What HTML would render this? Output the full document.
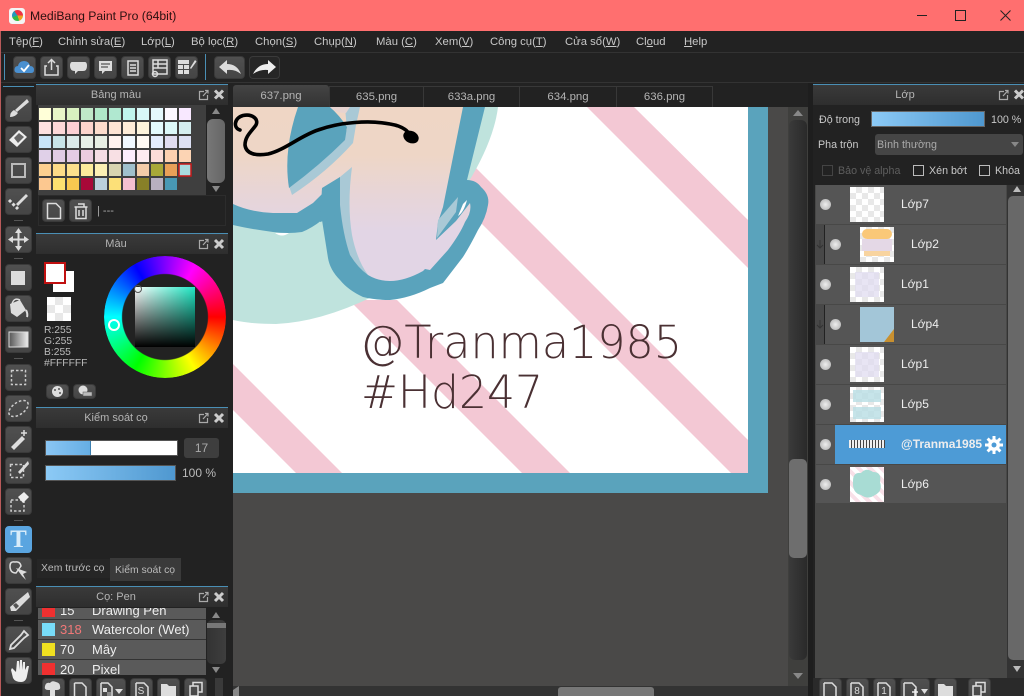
<!DOCTYPE html>
<html><head><meta charset="utf-8"><style>
html,body{margin:0;padding:0;width:1024px;height:696px;overflow:hidden;background:#222}
body{position:relative;font-family:"Liberation Sans","Noto Sans CJK SC",sans-serif;font-size:11.3px;color:#c8c8c8}
.a{position:absolute;box-sizing:border-box}
.t{position:absolute;white-space:nowrap;line-height:14px}
.c{text-align:center}
.hd{position:absolute;background:linear-gradient(#3a3a3a,#2e2e2e);height:20px;text-align:center;line-height:21px;color:#b4b4b4;font-size:11px}
.bl{position:absolute;height:1px;background:#4a8fb5}
.b{position:absolute;box-sizing:border-box;background:linear-gradient(#505050,#454545);border:1px solid #3a3a3a;border-radius:4px}
.row{position:absolute;left:816px;width:190px;height:39px;background:#555}
.ck{background-color:#fff;background-image:conic-gradient(#e8e8e8 25%,#fff 0 50%,#e8e8e8 0 75%,#fff 0);background-size:12px 12px}
.th{position:absolute;width:34px;height:35px;overflow:hidden}
.eye{position:absolute;width:11px;height:11px;border-radius:50%;background:radial-gradient(#eee,#aaa)}
.ln{position:absolute;color:#eee;font-size:12px;line-height:14px}
.tb{font-size:11.4px}
.ly{font-size:10.7px}
.br{font-size:13px}
u{text-decoration:underline}
</style></head><body>

<!-- title bar -->
<div class="a" style="left:0;top:0;width:1024px;height:31px;background:#ff6f6f"></div>
<div class="a" style="left:9px;top:8px;width:16px;height:16px;background:#f4f4f4;border-radius:3px"></div>
<div class="a" style="left:12px;top:10px;width:11px;height:11px;border-radius:50%;background:conic-gradient(#e34 0 25%,#f0a020 0 45%,#3b4 0 70%,#29b 0 90%,#e34 0)"></div>
<div class="t" style="left:30px;top:9px;font-size:12.2px;color:#2a1010">MediBang Paint Pro (64bit)</div>
<svg class="a" style="left:900px;top:0" width="124" height="31"><path d="M17 15.5H27" stroke="#222" fill="none"/><rect x="55.5" y="10.5" width="10" height="10" stroke="#222" fill="none"/><path d="M100.5 10.5l10 10M110.5 10.5l-10 10" stroke="#222" fill="none"/></svg>

<!-- left window border -->
<div class="a" style="left:0;top:31px;width:1px;height:665px;background:#b85a5a"></div>

<!-- menu -->
<div class="t" style="left:9px;top:35px">Tệp(<u>F</u>)</div>
<div class="t" style="left:58px;top:35px">Chỉnh sửa(<u>E</u>)</div>
<div class="t" style="left:141px;top:35px">Lớp(<u>L</u>)</div>
<div class="t" style="left:191px;top:35px">Bộ lọc(<u>R</u>)</div>
<div class="t" style="left:255px;top:35px">Chọn(<u>S</u>)</div>
<div class="t" style="left:314px;top:35px">Chụp(<u>N</u>)</div>
<div class="t" style="left:376px;top:35px">Màu (<u>C</u>)</div>
<div class="t" style="left:435px;top:35px">Xem(<u>V</u>)</div>
<div class="t" style="left:490px;top:35px">Công cụ(<u>T</u>)</div>
<div class="t" style="left:565px;top:35px">Cửa sổ(<u>W</u>)</div>
<div class="t" style="left:636px;top:35px">Cl<u>o</u>ud</div>
<div class="t" style="left:684px;top:35px"><u>H</u>elp</div>
<div class="a" style="left:1px;top:52px;width:1023px;height:1px;background:#333"></div>
<div class="a" style="left:1px;top:82px;width:1023px;height:1px;background:#333"></div>

<!-- toolbar -->
<div class="a" style="left:4px;top:54px;width:1px;height:26px;background:#4a8fb5"></div>
<div class="a" style="left:205px;top:54px;width:1px;height:26px;background:#4a8fb5"></div>
<div class="b" style="left:13px;top:56px;width:23px;height:23px"></div>
<div class="b" style="left:40px;top:56px;width:23px;height:23px"></div>
<div class="b" style="left:67px;top:56px;width:23px;height:23px"></div>
<div class="b" style="left:94px;top:56px;width:23px;height:23px"></div>
<div class="b" style="left:121px;top:56px;width:23px;height:23px"></div>
<div class="b" style="left:148px;top:56px;width:23px;height:23px"></div>
<div class="b" style="left:175px;top:56px;width:23px;height:23px"></div>
<div class="b" style="left:214px;top:56px;width:31px;height:23px"></div>
<div class="b" style="left:249px;top:56px;width:31px;height:23px;background:#262626"></div>

<!-- tool strip buttons -->
<div class="a" style="left:3px;top:86px;width:31px;height:1px;background:#4a8fb5"></div>
<div class="b" style="left:5px;top:95px;width:27px;height:27px"></div>
<div class="b" style="left:5px;top:126px;width:27px;height:27px"></div>
<div class="b" style="left:5px;top:157px;width:27px;height:27px"></div>
<div class="b" style="left:5px;top:188px;width:27px;height:27px"></div>
<div class="a" style="left:14px;top:220px;width:9px;height:1px;background:#555"></div>
<div class="b" style="left:5px;top:226px;width:27px;height:27px"></div>
<div class="a" style="left:14px;top:258px;width:9px;height:1px;background:#555"></div>
<div class="b" style="left:5px;top:264px;width:27px;height:27px"></div>
<div class="b" style="left:5px;top:295px;width:27px;height:27px"></div>
<div class="b" style="left:5px;top:326px;width:27px;height:27px"></div>
<div class="a" style="left:14px;top:358px;width:9px;height:1px;background:#555"></div>
<div class="b" style="left:5px;top:364px;width:27px;height:27px"></div>
<div class="b" style="left:5px;top:395px;width:27px;height:27px"></div>
<div class="b" style="left:5px;top:426px;width:27px;height:27px"></div>
<div class="b" style="left:5px;top:457px;width:27px;height:27px"></div>
<div class="b" style="left:5px;top:488px;width:27px;height:27px"></div>
<div class="a" style="left:14px;top:520px;width:9px;height:1px;background:#555"></div>
<div class="b" style="left:5px;top:526px;width:27px;height:27px;background:#5aa5e0;border-color:#5aa5e0"></div>
<div class="b" style="left:5px;top:557px;width:27px;height:27px"></div>
<div class="b" style="left:5px;top:588px;width:27px;height:27px"></div>
<div class="a" style="left:14px;top:620px;width:9px;height:1px;background:#555"></div>
<div class="b" style="left:5px;top:626px;width:27px;height:27px"></div>
<div class="b" style="left:5px;top:657px;width:27px;height:27px"></div>
<div class="t" style="left:5px;top:528px;width:27px;text-align:center;font:bold 25px/24px 'Liberation Serif',serif;color:#d8ecfa">T</div>

<!-- palette panel -->
<div class="bl" style="left:36px;top:84px;width:192px"></div>
<div class="hd" style="left:36px;top:85px;width:192px;padding-right:32px;box-sizing:border-box;text-align:center">Bảng màu</div>
<div class="a" style="left:38px;top:105px;width:168px;height:90px;background:#3f3f3f"></div>
<svg class="a" style="left:39px;top:108px" width="156" height="86">
<g id="p">
<rect x="0" y="0" width="12" height="12" fill="#ffffd8"/><rect x="14" y="0" width="12" height="12" fill="#e8f5c8"/><rect x="28" y="0" width="12" height="12" fill="#d8f0c0"/><rect x="42" y="0" width="12" height="12" fill="#c0e8c8"/><rect x="56" y="0" width="12" height="12" fill="#b0e8c8"/><rect x="70" y="0" width="12" height="12" fill="#b0e8d0"/><rect x="84" y="0" width="12" height="12" fill="#c0f4ec"/><rect x="98" y="0" width="12" height="12" fill="#d8f8f8"/><rect x="112" y="0" width="12" height="12" fill="#e4f8fc"/><rect x="126" y="0" width="12" height="12" fill="#fcf8ff"/><rect x="140" y="0" width="12" height="12" fill="#f8e8ff"/>
<rect x="0" y="14" width="12" height="12" fill="#fde0e0"/><rect x="14" y="14" width="12" height="12" fill="#fcd8d8"/><rect x="28" y="14" width="12" height="12" fill="#fcd0d4"/><rect x="42" y="14" width="12" height="12" fill="#fcd4cc"/><rect x="56" y="14" width="12" height="12" fill="#fcdccc"/><rect x="70" y="14" width="12" height="12" fill="#fde4d4"/><rect x="84" y="14" width="12" height="12" fill="#fdecd8"/><rect x="98" y="14" width="12" height="12" fill="#fdf4dc"/><rect x="112" y="14" width="12" height="12" fill="#e4fafc"/><rect x="126" y="14" width="12" height="12" fill="#dcf8f8"/><rect x="140" y="14" width="12" height="12" fill="#d4eef0"/>
<rect x="0" y="28" width="12" height="12" fill="#c8e4f8"/><rect x="14" y="28" width="12" height="12" fill="#c8e4e8"/><rect x="28" y="28" width="12" height="12" fill="#dceaea"/><rect x="42" y="28" width="12" height="12" fill="#e8f0e8"/><rect x="56" y="28" width="12" height="12" fill="#e8efe4"/><rect x="70" y="28" width="12" height="12" fill="#fff4f0"/><rect x="84" y="28" width="12" height="12" fill="#f0f8ff"/><rect x="98" y="28" width="12" height="12" fill="#fffaf4"/><rect x="112" y="28" width="12" height="12" fill="#e4ecfc"/><rect x="126" y="28" width="12" height="12" fill="#e0dcf0"/><rect x="140" y="28" width="12" height="12" fill="#dce0f4"/>
<rect x="0" y="42" width="12" height="12" fill="#e0d0e8"/><rect x="14" y="42" width="12" height="12" fill="#e0cce4"/><rect x="28" y="42" width="12" height="12" fill="#e4cce4"/><rect x="42" y="42" width="12" height="12" fill="#eccce0"/><rect x="56" y="42" width="12" height="12" fill="#f4dce4"/><rect x="70" y="42" width="12" height="12" fill="#f8e0e4"/><rect x="84" y="42" width="12" height="12" fill="#fceefc"/><rect x="98" y="42" width="12" height="12" fill="#fdecf0"/><rect x="112" y="42" width="12" height="12" fill="#fcdcd8"/><rect x="126" y="42" width="12" height="12" fill="#fcd0b0"/><rect x="140" y="42" width="12" height="12" fill="#fcd4b4"/>
<rect x="0" y="56" width="12" height="12" fill="#fcd090"/><rect x="14" y="56" width="12" height="12" fill="#fcdc88"/><rect x="28" y="56" width="12" height="12" fill="#fce08c"/><rect x="42" y="56" width="12" height="12" fill="#fcec9c"/><rect x="56" y="56" width="12" height="12" fill="#fcf0b4"/><rect x="70" y="56" width="12" height="12" fill="#d8d4b0"/><rect x="84" y="56" width="12" height="12" fill="#a0c0cc"/><rect x="98" y="56" width="12" height="12" fill="#f4cca8"/><rect x="112" y="56" width="12" height="12" fill="#a8a838"/><rect x="126" y="56" width="12" height="12" fill="#e8a058"/><rect x="140" y="56" width="12" height="12" fill="#a8dce0" stroke="#c81818" stroke-width="1.5"/>
<rect x="0" y="70" width="12" height="12" fill="#fcc890"/><rect x="14" y="70" width="12" height="12" fill="#fce070"/><rect x="28" y="70" width="12" height="12" fill="#f8c850"/><rect x="42" y="70" width="12" height="12" fill="#a80838"/><rect x="56" y="70" width="12" height="12" fill="#bcd0dc"/><rect x="70" y="70" width="12" height="12" fill="#fce078"/><rect x="84" y="70" width="12" height="12" fill="#f4c0d0"/><rect x="98" y="70" width="12" height="12" fill="#888028"/><rect x="112" y="70" width="12" height="12" fill="#b8b0c0"/><rect x="126" y="70" width="12" height="12" fill="#4898b4"/>
</g></svg>
<div class="a" style="left:207px;top:119px;width:18px;height:64px;background:linear-gradient(90deg,#777,#666);border-radius:6px"></div>
<div class="a" style="left:38px;top:195px;width:188px;height:31px;border:1px solid #2c2c2c"></div>
<div class="b" style="left:42px;top:199px;width:23px;height:23px"></div>
<div class="b" style="left:69px;top:199px;width:23px;height:23px"></div>
<div class="t" style="left:97px;top:204px;color:#aaa;font-size:11px">| ---</div>

<!-- colour panel -->
<div class="bl" style="left:36px;top:233px;width:192px"></div>
<div class="hd" style="left:36px;top:234px;width:192px;padding-right:32px;box-sizing:border-box">Màu</div>
<div class="a" style="left:53px;top:271px;width:21px;height:21px;background:#fff"></div>
<div class="a" style="left:44px;top:262px;width:22px;height:22px;background:#fff;border:2px solid #c01010"></div>
<div class="a ck" style="left:47px;top:297px;width:24px;height:24px;background-size:16px 16px"></div>
<div class="t" style="left:44px;top:325px;font-size:10.3px;line-height:11px;color:#bbb">R:255<br>G:255<br>B:255<br>#FFFFFF</div>
<div class="a" style="left:104px;top:256px;width:122px;height:122px;border-radius:50%;background:conic-gradient(from 90deg,#f00,#ff0,#0f0,#0ff,#00f,#f0f,#f00);-webkit-mask:radial-gradient(circle,transparent 42.5px,#000 43.5px)"></div>
<div class="a" style="left:135px;top:287px;width:60px;height:60px;background:linear-gradient(transparent,#000),linear-gradient(90deg,#fff,#1fe8c4)"></div>
<div class="a" style="left:134px;top:285px;width:8px;height:8px;border:1px solid #555;border-radius:50%"></div>
<div class="a" style="left:108px;top:319px;width:12px;height:12px;border:2px solid #fff;border-radius:50%"></div>
<div class="b" style="left:46px;top:384px;width:23px;height:15px"></div>
<div class="b" style="left:73px;top:384px;width:23px;height:15px"></div>

<!-- brush control -->
<div class="bl" style="left:36px;top:407px;width:192px"></div>
<div class="hd" style="left:36px;top:408px;width:192px;padding-right:32px;box-sizing:border-box">Kiểm soát cọ</div>
<div class="a" style="left:45px;top:440px;width:133px;height:16px;background:#fff;border:1px solid #555"></div>
<div class="a" style="left:46px;top:441px;width:45px;height:14px;background:linear-gradient(90deg,#8ac6f4,#66aee4);border-right:1px solid #3b7fb0"></div>
<div class="a" style="left:184px;top:438px;width:35px;height:20px;background:#3e3e3e;border-radius:3px;text-align:center;line-height:20px;color:#aaa;font-size:12px">17</div>
<div class="a" style="left:45px;top:465px;width:131px;height:16px;background:linear-gradient(90deg,#8ccaf6,#4f98d0);border:1px solid #555"></div>
<div class="t" style="left:182px;top:466px;color:#bbb;font-size:12px">100 %</div>
<div class="a" style="left:37px;top:559px;width:73px;height:19px;background:#262626"></div>
<div class="t" style="left:41px;top:562px;font-size:10.4px;color:#bbb">Xem trước cọ</div>
<div class="a" style="left:110px;top:558px;width:71px;height:23px;background:#3a3a3a"></div>
<div class="t" style="left:115px;top:564px;font-size:10.4px;color:#bbb">Kiểm soát cọ</div>

<!-- brush panel -->
<div class="bl" style="left:36px;top:586px;width:192px"></div>
<div class="hd" style="left:36px;top:587px;width:192px;padding-right:32px;box-sizing:border-box">Cọ: Pen</div>
<div class="a" style="left:38px;top:608px;width:168px;height:67px;background:#5a5a5a;overflow:hidden">
 <div class="a" style="left:0;top:11px;width:168px;height:1px;background:#333"></div>
 <div class="a" style="left:0;top:31px;width:168px;height:1px;background:#333"></div>
 <div class="a" style="left:0;top:51px;width:168px;height:1px;background:#333"></div>
 <div class="a" style="left:4px;top:-3px;width:13px;height:12px;background:#f03030"></div>
 <div class="a" style="left:4px;top:15px;width:13px;height:13px;background:#78dcf8"></div>
 <div class="a" style="left:4px;top:35px;width:13px;height:13px;background:#f0e020"></div>
 <div class="a" style="left:4px;top:55px;width:13px;height:13px;background:#f03030"></div>
 <div class="t br" style="left:22px;top:-4px;color:#eee">15</div><div class="t br" style="left:54px;top:-4px;color:#eee">Drawing Pen</div>
 <div class="t br" style="left:22px;top:15px;color:#f07878">318</div><div class="t br" style="left:54px;top:15px;color:#eee">Watercolor (Wet)</div>
 <div class="t br" style="left:22px;top:35px;color:#eee">70</div><div class="t br" style="left:54px;top:35px;color:#eee">Mây</div>
 <div class="t br" style="left:22px;top:55px;color:#eee">20</div><div class="t br" style="left:54px;top:55px;color:#eee">Pixel</div>
</div>
<div class="a" style="left:207px;top:620px;width:19px;height:44px;background:linear-gradient(90deg,#333,#3e3e3e);border-radius:5px"></div>
<div class="a" style="left:207px;top:623px;width:19px;height:5px;background:#777"></div>
<div class="b" style="left:42px;top:678px;width:23px;height:22px"></div>
<div class="b" style="left:69px;top:678px;width:23px;height:22px"></div>
<div class="b" style="left:96px;top:678px;width:30px;height:22px"></div>
<div class="b" style="left:130px;top:678px;width:23px;height:22px"></div>
<div class="b" style="left:157px;top:678px;width:23px;height:22px"></div>
<div class="b" style="left:184px;top:678px;width:23px;height:22px"></div>
<div class="a" style="left:215px;top:678px;width:8px;height:18px;background:#3a3a3a"></div>

<!-- tabs -->
<div class="a tb" style="left:233px;top:85px;width:96px;height:22px;background:linear-gradient(#444,#333);border-radius:3px 3px 0 0;text-align:center;line-height:23px;color:#b4b4b4">637.png</div>
<div class="a tb" style="left:329px;top:86px;width:95px;height:21px;border:1px solid #383838;border-bottom:0;text-align:center;line-height:21px;color:#b4b4b4">635.png</div>
<div class="a tb" style="left:424px;top:86px;width:96px;height:21px;border:1px solid #383838;border-left:0;border-bottom:0;text-align:center;line-height:21px;color:#b4b4b4">633a.png</div>
<div class="a tb" style="left:520px;top:86px;width:97px;height:21px;border:1px solid #383838;border-left:0;border-bottom:0;text-align:center;line-height:21px;color:#b4b4b4">634.png</div>
<div class="a tb" style="left:617px;top:86px;width:96px;height:21px;border:1px solid #383838;border-left:0;border-bottom:0;text-align:center;line-height:21px;color:#b4b4b4">636.png</div>

<!-- canvas -->
<div class="a" style="left:233px;top:107px;width:555px;height:579px;background:#4a4948"></div>
<svg class="a" style="left:233px;top:107px" width="555" height="386" viewBox="233 107 555 386">
<defs><linearGradient id="sk" x1="0" y1="107" x2="0" y2="285" gradientUnits="userSpaceOnUse"><stop offset="0" stop-color="#efd6c5"/><stop offset=".27" stop-color="#eed6c6"/><stop offset=".5" stop-color="#e7d5d8"/><stop offset=".7" stop-color="#e2d5e5"/><stop offset="1" stop-color="#e2d5e5"/></linearGradient></defs>
<rect x="233" y="107" width="535" height="386" fill="#5aa3bc"/>
<rect x="233" y="107" width="515" height="366" fill="#fff"/>
<g fill="#f3c8d4">
<path d="M587 107H634L748 220V268Z"/>
<path d="M460 152L748 440V473H731L400 142Z"/>
<path d="M349 300H397L570 473H522L300 251Z"/>
<path d="M233 364L342 473H296L233 410Z"/>
</g>
<path d="M233 220H330L372 297Q320 322 276 324Q250 324 233 320Z" fill="#bfe3dd"/>
<path d="M470 107H498Q494 140 468 183L450 150Z" fill="#bfe3dd"/>
<path d="M485 107L467 180Q476 180 481 187Q490 195 488 205Q486 218 478 230Q470 246 463 257L443 283L430 288Q410 298 390 300Q375 300 363 297Q348 290 340 280Q330 270 328 258L322 220Q312 228 302 232Q288 234 273 232Q250 229 233 225V107Z" fill="#5aa3bc"/>
<path d="M233 107H463L443 207L438 222L436 240L456 221L470 203Q472 212 465 222Q460 234 448 250L430 270L425 269L423 271Q405 281 390 281Q378 281 368 275Q355 262 350 240L347 200L340 177Q330 186 313 203L297 213L273 213Q250 212 233 204Z" fill="url(#sk)"/>
<path d="M322 188L340 177V213Q321 222 320 222Z" fill="#5aa3bc"/>
<path d="M352 167L340 177L340 205Q343 235 350 255Q358 268 368 275Q357 260 352 235Q347 205 352 167Z" fill="#a9c9d6"/>
<path d="M345 107H360L356 125L353 143Q327 172 292 195L289 186L347 130Z" fill="#a9c9d6"/>
<path d="M298 107H330Q340 116 347 127L345 140Q320 165 289 188Q283 150 298 107Z" fill="#5aa3bc"/>
<path d="M330 107H350L346 113Q335 113 330 107Z" fill="#e6d3d0"/>
<path d="M458 197L456 212L437 238L438 220Z" fill="#a9c9d6"/>
<path d="M463 204L467 200Q464 212 458 216Z" fill="#fff"/>
<path d="M275 233Q282 238 289 233Z" fill="#fff"/>
<path d="M240 130C233 128 234 118 243 115.5C252 113.5 259 119 256 125C252 131 245 136 245 145C246 154 256 156 268 154C285 150 300 136 318 130C340 122 370 120 390 124C402 126 408 130 410 136" fill="none" stroke="#000" stroke-width="3.6" stroke-linecap="round"/>
<ellipse cx="411" cy="137" rx="8" ry="6" fill="#000" transform="rotate(25 411 137)"/>
<g fill="#4a3033" font-family="'DejaVu Sans','Liberation Sans',sans-serif" font-weight="200" font-size="45">
<text x="360" y="358" textLength="322" lengthAdjust="spacingAndGlyphs">@Tranma1985</text>
<text x="361" y="408" textLength="182" lengthAdjust="spacingAndGlyphs">#Hd247</text>
</g>
</svg>

<!-- canvas scrollbars -->
<div class="a" style="left:788px;top:107px;width:20px;height:579px;background:#3f3f3d"></div>
<div class="a" style="left:789px;top:120px;width:18px;height:540px;background:linear-gradient(90deg,#3a3a3a,#2a2a2a);border-radius:6px"></div>
<div class="a" style="left:789px;top:459px;width:18px;height:99px;background:#6e6e6e;border-radius:5px"></div>
<div class="a" style="left:808px;top:83px;width:5px;height:613px;background:#1e1e1e"></div>
<div class="a" style="left:233px;top:686px;width:575px;height:10px;background:#333"></div>
<div class="a" style="left:558px;top:687px;width:96px;height:9px;background:#777;border-radius:3px 3px 0 0"></div>

<!-- layer panel -->
<div class="bl" style="left:813px;top:84px;width:211px"></div>
<div class="hd" style="left:813px;top:85px;width:211px;padding-right:27px;box-sizing:border-box">Lớp</div>
<div class="t ly" style="left:819px;top:113px">Độ trong</div>
<div class="a" style="left:871px;top:111px;width:114px;height:16px;background:linear-gradient(90deg,#8ccaf6,#4f98d0);border:1px solid #666"></div>
<div class="t ly" style="left:991px;top:113px">100 %</div>
<div class="t ly" style="left:818px;top:138px">Pha trộn</div>
<div class="a" style="left:875px;top:134px;width:148px;height:21px;background:#454545;border-radius:3px"></div>
<div class="t ly" style="left:877px;top:138px;color:#aaa">Bình thường</div>
<svg class="a" style="left:1010px;top:142px" width="10" height="6"><path d="M1 0H9L5 5Z" fill="#888"/></svg>
<div class="a" style="left:822px;top:165px;width:11px;height:11px;border:1px solid #444"></div>
<div class="t ly" style="left:838px;top:164px;color:#5e5e5e">Bảo vệ alpha</div>
<div class="a" style="left:913px;top:165px;width:11px;height:11px;border:1px solid #bbb"></div>
<div class="t ly" style="left:929px;top:164px">Xén bớt</div>
<div class="a" style="left:979px;top:165px;width:11px;height:11px;border:1px solid #bbb"></div>
<div class="t ly" style="left:995px;top:164px">Khóa</div>

<div class="a" style="left:815px;top:185px;width:192px;height:493px;background:#484847"></div>
<div class="a" style="left:1007px;top:185px;width:17px;height:493px;background:#333"></div>
<div class="a" style="left:1008px;top:196px;width:16px;height:464px;background:#686868;border-radius:5px 0 0 5px"></div>
<div class="a" style="left:813px;top:678px;width:211px;height:18px;background:#2a2a2a"></div>

<!-- rows -->
<div class="row" style="top:185px"></div>
<div class="eye" style="left:820px;top:199px"></div>
<div class="th ck" style="left:850px;top:187px"></div>
<div class="ln" style="left:901px;top:197px">Lớp7</div>

<div class="row" style="top:225px;left:815px;width:191px"></div>
<div class="a" style="left:815px;top:225px;width:10px;height:39px;background:#484848;border-right:1px solid #222"></div>
<div class="eye" style="left:830px;top:239px"></div>
<div class="th ck" style="left:860px;top:227px"><div class="a" style="left:2px;top:2px;width:30px;height:10px;background:#fac878;border-radius:5px"></div><div class="a" style="left:2px;top:12px;width:30px;height:12px;background:#e4d8e6"></div><div class="a" style="left:4px;top:24px;width:26px;height:5px;background:#f8d4a0"></div></div>
<div class="ln" style="left:911px;top:237px">Lớp2</div>

<div class="row" style="top:265px"></div>
<div class="eye" style="left:820px;top:279px"></div>
<div class="th ck" style="left:850px;top:267px"><div class="a" style="left:5px;top:5px;width:24px;height:25px;background:#e0dcf0;opacity:.75"></div></div>
<div class="ln" style="left:901px;top:277px">Lớp1</div>

<div class="row" style="top:305px;left:815px;width:191px"></div>
<div class="a" style="left:815px;top:305px;width:10px;height:39px;background:#484848;border-right:1px solid #222"></div>
<div class="eye" style="left:830px;top:319px"></div>
<div class="th" style="left:860px;top:307px;background:#a3c6d8"><svg class="a" style="left:0;top:0" width="34" height="35"><path d="M34 22L24 35H34Z" fill="#c89030"/></svg></div>
<div class="ln" style="left:911px;top:317px">Lớp4</div>

<div class="row" style="top:345px"></div>
<div class="eye" style="left:820px;top:359px"></div>
<div class="th ck" style="left:850px;top:347px"><div class="a" style="left:5px;top:5px;width:24px;height:25px;background:#e0dcf0;opacity:.75"></div></div>
<div class="ln" style="left:901px;top:357px">Lớp1</div>

<div class="row" style="top:385px"></div>
<div class="eye" style="left:820px;top:399px"></div>
<div class="th ck" style="left:850px;top:387px"><div class="a" style="left:3px;top:3px;width:28px;height:12px;background:#b8dde4;opacity:.8"></div><div class="a" style="left:3px;top:20px;width:28px;height:12px;background:#b8dde4;opacity:.8"></div></div>
<div class="ln" style="left:901px;top:397px">Lớp5</div>

<div class="row" style="top:425px"></div>
<div class="a" style="left:835px;top:425px;width:171px;height:39px;background:#4d9bd6"></div>
<div class="eye" style="left:820px;top:439px"></div>
<div class="a" style="left:849px;top:440px;width:36px;height:8px;background:repeating-linear-gradient(90deg,#eee 0 2px,#444 2px 3px)"></div>
<div class="ln" style="left:901px;top:437px;font-weight:bold;width:88px;overflow:hidden;white-space:nowrap">@Tranma1985</div>
<svg class="a" style="left:985px;top:436px" width="18" height="18" viewBox="0 0 18 18"><g stroke="#fff" stroke-width="3"><path d="M9 0V18M0 9H18M2.6 2.6L15.4 15.4M15.4 2.6L2.6 15.4"/></g><circle cx="9" cy="9" r="6" fill="#fff"/><circle cx="9" cy="9" r="2.5" fill="#4d9bd6"/></svg>

<div class="row" style="top:465px;height:38px"></div>
<div class="eye" style="left:820px;top:479px"></div>
<div class="th" style="left:850px;top:467px;background:repeating-linear-gradient(45deg,#fff 0 4px,#f8e0e8 4px 8px)"><svg class="a" style="left:0;top:0" width="34" height="35"><path d="M3 14Q3 5 11 6Q16 0 23 5Q32 5 30 15Q33 24 25 28Q18 33 11 28Q2 26 3 14Z" fill="#a8dcd4"/></svg></div>
<div class="ln" style="left:901px;top:477px">Lớp6</div>

<div class="b" style="left:819px;top:678px;width:23px;height:22px"></div>
<div class="b" style="left:846px;top:678px;width:23px;height:22px"></div>
<div class="b" style="left:873px;top:678px;width:23px;height:22px"></div>
<div class="b" style="left:900px;top:678px;width:30px;height:22px"></div>
<div class="b" style="left:934px;top:678px;width:23px;height:22px"></div>
<div class="b" style="left:968px;top:678px;width:23px;height:22px"></div>

<!-- icon overlay -->
<svg class="a" style="left:0;top:0;pointer-events:none" width="1024" height="696" viewBox="0 0 1024 696">
<!-- panel icons: pop-out and close -->
<g fill="none" stroke="#aaa" stroke-width="1.2">
<path d="M204 91.5H199.5V99.5H207.500V95M203 96L208 90.500M205 90.500H208V93.500"/>
<path d="M204 240.500H199.500V248.500H207.500V244M203 245L208 239.500M205 239.500H208V242.500"/>
<path d="M204 414.500H199.500V422.500H207.500V418M203 419L208 413.500M205 413.500H208V416.500"/>
<path d="M204 593.500H199.500V601.500H207.500V597M203 598L208 592.500M205 592.500H208V595.500"/>
<path d="M1004 91.500H999.500V99.500H1007.500V95M1003 96L1008 90.500M1005 90.500H1008V93.500"/>
</g>
<g stroke="#ccc" stroke-width="3" fill="none">
<path d="M215 90.500L223 98.500M223 90.500L215 98.500"/>
<path d="M215 240L223 248M223 240L215 248"/>
<path d="M215 414L223 422M223 414L215 422"/>
<path d="M215 593L223 601M223 593L215 601"/>
<path d="M1015 90.500L1023 98.500M1023 90.500L1015 98.500"/>
</g>
<!-- scroll arrows -->
<g fill="#888">
<path d="M216 108L220 114H212Z"/><path d="M212 186H220L216 192Z"/>
<path d="M216 612L220 618H212Z"/><path d="M212 667H220L216 673Z"/>
<path d="M798 110L803 116H793Z"/><path d="M793 673H803L798 679Z"/>
<path d="M1017 186L1021 192H1013Z" fill="#bbb"/><path d="M1013 666H1021L1017 672Z" fill="#bbb"/>
<path d="M233 696V690L239 686V696Z"/>
</g>
<!-- clip markers on clipped layers -->
<path d="M820 240V248M817 245L820 248L823 245M820 320V328M817 325L820 328L823 325" stroke="#333" fill="none"/>
<!-- toolbar icons -->
<path d="M18 73Q14 73 14.500 69Q15 66 18 66Q19 61 24 61Q29 61 30 66Q34 66 34 70Q34 73 31 73Z" fill="#4a90d0"/>
<path d="M21 68L24 71L29 65" stroke="#fff" stroke-width="1.800" fill="none"/>
<g fill="none" stroke="#ddd" stroke-width="1.500">
<path d="M47 66H45V75H58V66H56"/><path d="M51.500 70V60M48 63L51.500 59.500L55 63"/>
<rect x="128" y="61" width="10" height="14" /><path d="M130 65H136M130 68H136M130 71H136"/>
<rect x="153" y="60" width="14" height="14"/><path d="M153 64H167M153 68H167M158 60V68"/><circle cx="155" cy="74" r="2.500"/>
</g>
<path d="M72 62H85Q87 62 87 66Q87 71 83 71H78L75 74V71Q70 71 70 66Q70 62 72 62Z" fill="#ddd"/>
<path d="M99 61H112V71H105L102 74V71H99Z" fill="#ddd"/><path d="M101 64H110M101 67H108" stroke="#555" stroke-width="1.200"/>
<g fill="#ddd"><rect x="178" y="65" width="5" height="4"/><rect x="184" y="65" width="5" height="4"/><rect x="178" y="70" width="5" height="4"/><rect x="184" y="70" width="5" height="4"/><rect x="178" y="60" width="11" height="4"/><path d="M190 68L195 60L196.500 61.500L191 69Z"/></g>
<path d="M219 67L227 60V64Q237 64 241 74Q235 69 227 70V74Z" fill="#ddd"/>
<path d="M276 67L268 60V64Q258 64 253 74Q260 69 268 70V74Z" fill="#eee"/>
<!-- tools -->
<path d="M27 99L15 110L17 112L29 102Z" fill="#ddd"/><path d="M14 110Q10 112 10 117Q15 117 18 113Z" fill="#ddd"/>
<path d="M9 140L19 130L27 137L17 147Z" fill="#eee"/><path d="M14 138L19 133L24 137L18 143Z" fill="#666"/>
<rect x="12" y="164" width="13" height="13" fill="none" stroke="#bbb" stroke-width="2"/>
<path d="M26 194L16 204L18 206L28 196Z" fill="#ddd"/><path d="M9 200L18 209" stroke="#ddd" stroke-width="3" stroke-dasharray="3 2"/>
<path d="M18.500 231V248M10 239.500H27" stroke="#ddd" stroke-width="2"/><path d="M18.500 228L22 233H15ZM18.500 251L22 246H15ZM8 239.500L13 236V243ZM29 239.500L24 236V243Z" fill="#ddd"/>
<rect x="11" y="271" width="14" height="14" fill="#ddd"/>
<path d="M10 304L20 300L26 310L17 317L11 313Z" fill="#ddd"/><path d="M12 304Q14 297 20 300" fill="none" stroke="#ddd" stroke-width="1.500"/><path d="M26 310Q28 314 27 317" stroke="#ddd" stroke-width="2"/>
<defs><linearGradient id="gr"><stop offset="0" stop-color="#555"/><stop offset="1" stop-color="#eee"/></linearGradient></defs>
<rect x="9" y="332" width="19" height="15" fill="url(#gr)" stroke="#ddd"/>
<rect x="11.500" y="370.500" width="14" height="14" fill="none" stroke="#ccc" stroke-width="1.500" stroke-dasharray="2.500 2"/>
<ellipse cx="18.500" cy="408.500" rx="11" ry="6" transform="rotate(-35 18.500 408.500)" fill="none" stroke="#ccc" stroke-width="1.500" stroke-dasharray="2.500 2"/>
<path d="M11 447L22 436L25 439L14 450Z" fill="#ddd"/><path d="M24 430V436M21 433H27" stroke="#ddd" stroke-width="1.500"/>
<rect x="10.500" y="464.500" width="13" height="13" fill="none" stroke="#ccc" stroke-width="1.500" stroke-dasharray="2.500 2"/><path d="M28 461L18 472L20 474L29 464Z" fill="#ddd"/>
<rect x="11" y="500" width="13" height="11" fill="none" stroke="#ccc" stroke-width="1.500" stroke-dasharray="2.500 2"/><path d="M18 497L24 492L29 497L23 503Z" fill="#eee"/>
<path d="M10 566Q10 561 15 562Q20 561 21 566L16 573Q10 573 10 566Z" fill="none" stroke="#ddd" stroke-width="1.500"/><path d="M16 568L27 572L23 574L26 580L22 576Z" fill="#ddd"/>
<path d="M28 592L10 607L11 611H16L30 597Z" fill="#ddd"/><path d="M13 605L16 609L19 606L16 603Z" fill="#555"/>
<path d="M24 631L28 635L24 638L14 648L10 649L11 645L21 635Z" fill="none" stroke="#ddd" stroke-width="1.800"/>
<path d="M11 670L13 678Q15 682 21 682Q26 682 27 676L29 666H27L25 670V662H23L22 670V660H20L19 670V661H17L16 672L12 668Z" fill="#eee"/>
<!-- colour buttons -->
<circle cx="57.500" cy="391.500" r="5.500" fill="#ddd"/><circle cx="55" cy="390" r="1" fill="#555"/><circle cx="59" cy="389" r="1" fill="#555"/><circle cx="60" cy="393" r="1" fill="#555"/>
<circle cx="83" cy="390" r="4.500" fill="#ddd"/><rect x="83" y="392" width="9" height="4" fill="#bbb" stroke="#555" stroke-width=".5"/>
<!-- doc/trash palette -->
<g fill="none" stroke="#ddd" stroke-width="1.500">
<path d="M47.500 203.500H56L60.500 208V218.500H47.500Z"/>
<path d="M74.500 207H87.500M76 207V218.500H86V207M78 204H84V207M79 210V216M83 210V216"/>
</g>
<!-- brush bottom icons -->
<g fill="none" stroke="#ddd" stroke-width="1.500">
<path d="M74.500 683H82L86 687V696M74.500 683V696"/>
<path d="M101 683H108L112 687V696M101 683V696"/>
<path d="M136 683H144L148 687V696M136 683V696"/>
<path d="M190 686H198V696H190ZM193 686V682.500H202V692H198"/>
<path d="M824 683H832L836 687V696M824 683V696"/>
<path d="M851 683H859L863 687V696M851 683V696"/>
<path d="M878 683H886L890 687V696M878 683V696"/>
<path d="M904 683H912L916 687V696M904 683V696"/>
<path d="M973 686H981V696H973ZM976 686V682.500H985V692H981"/>
</g>
<path d="M48 690Q44 690 45 686Q46 682 50 683Q52 680 56 682Q60 683 60 686Q61 690 57 690H55V696H50V690Z" fill="#ddd"/>
<path d="M161 684H167L169 686H176V696H161Z" fill="#ddd"/>
<path d="M938 684H944L946 686H953V696H938Z" fill="#ddd"/>
<rect x="103" y="688" width="4" height="4" fill="#ddd"/><rect x="107" y="692" width="4" height="4" fill="#888"/>
<path d="M115 689H123L119 694Z" fill="#ddd"/><path d="M921 689H928L924.500 694Z" fill="#ddd"/>
<path d="M912 692H918M915 689V696" stroke="#eee" stroke-width="1.500"/>
<text x="857" y="694" fill="#ddd" font-size="10" font-family="'Liberation Sans',sans-serif" text-anchor="middle">8</text>
<text x="884" y="694" fill="#ddd" font-size="10" font-family="'Liberation Sans',sans-serif" text-anchor="middle">1</text>
<text x="141" y="694" fill="#ddd" font-size="10" font-family="'Liberation Sans',sans-serif" text-anchor="middle">S</text>
</svg>
</body></html>
